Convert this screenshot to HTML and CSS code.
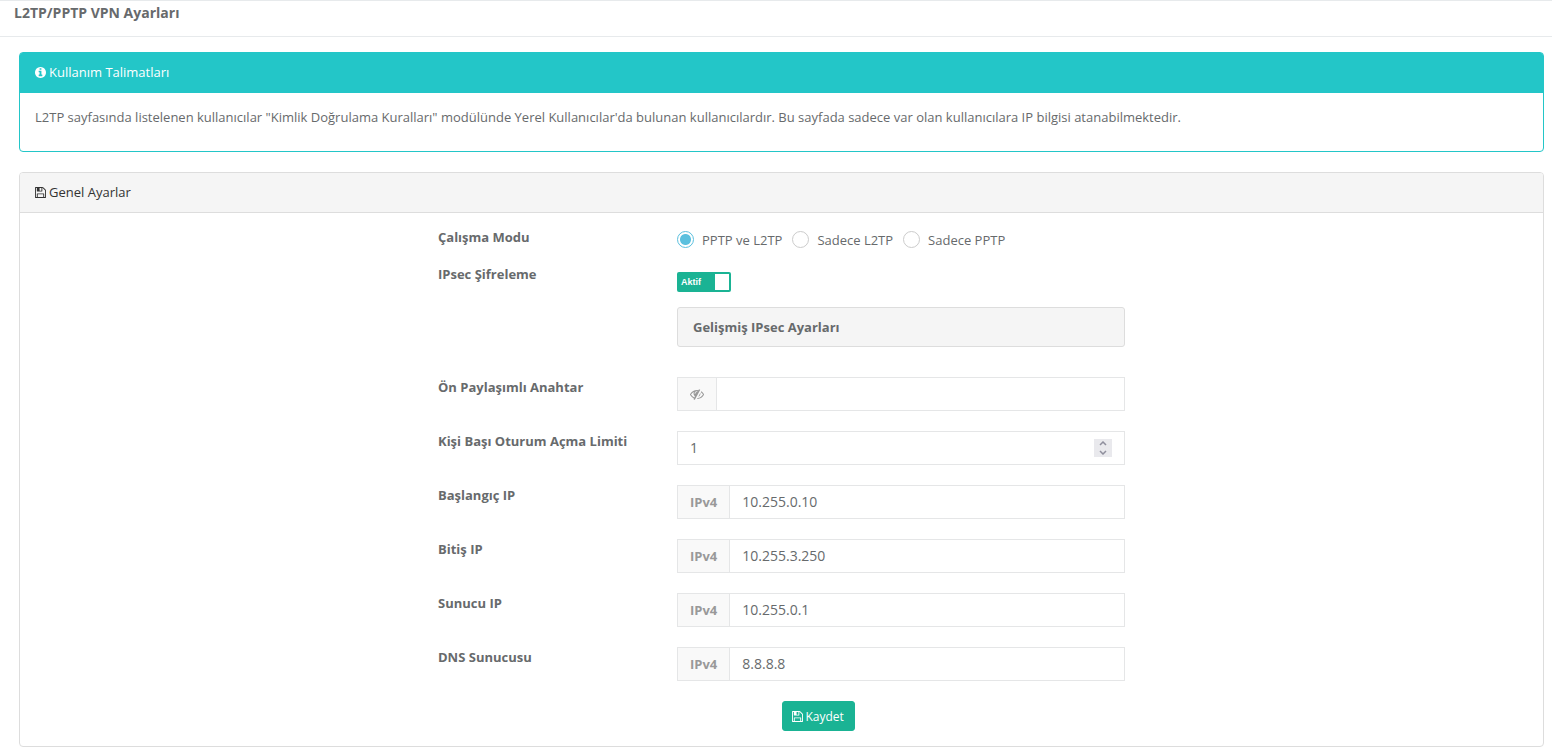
FILE: index.html
```html
<!DOCTYPE html>
<html lang="tr">
<head>
<meta charset="utf-8">
<meta name="viewport" content="width=device-width, initial-scale=1">
<title>L2TP/PPTP VPN Ayarları</title>
<link rel="stylesheet" href="styles.css">
</head>
<body>
<svg class="sprite" aria-hidden="true">
  <symbol id="icon-save" viewBox="128 128 1536 1536"><path d="M512 1536h768v-384h-768v384zm896 0h128v-896q0-14-10-38.5t-20-34.5l-281-281q-10-10-34-20t-39-10v416q0 40-28 68t-68 28h-576q-40 0-68-28t-28-68v-416h-128v1280h128v-416q0-40 28-68t68-28h832q40 0 68 28t28 68v416zm-384-928v-320q0-13-9.5-22.5t-22.5-9.5h-192q-13 0-22.5 9.5t-9.5 22.5v320q0 13 9.5 22.5t22.5 9.5h192q13 0 22.5-9.5t9.5-22.5zm640 32v928q0 40-28 68t-68 28h-1344q-40 0-68-28t-28-68v-1344q0-40 28-68t68-28h928q40 0 88 20t76 48l280 280q28 28 48 76t20 88z"/></symbol>
  <symbol id="icon-info" viewBox="128 128 1536 1536"><path d="M1152 1376v-160q0-14-9-23t-23-9h-96v-512q0-14-9-23t-23-9h-320q-14 0-23 9t-9 23v160q0 14 9 23t23 9h96v320h-96q-14 0-23 9t-9 23v160q0 14 9 23t23 9h448q14 0 23-9t9-23zm-128-896v-160q0-14-9-23t-23-9h-192q-14 0-23 9t-9 23v160q0 14 9 23t23 9h192q14 0 23-9t9-23zm640 416q0 209-103 385.5t-279.5 279.5-385.5 103-385.5-103-279.5-279.5-103-385.5 103-385.5 279.5-279.5 385.5-103 385.5 103 279.5 279.5 103 385.5z"/></symbol>
  <symbol id="icon-eye-slash" viewBox="0 0 1792 1792"><path d="M555 1335l78-141q-87-63-136-159t-49-203q0-121 61-225-229 117-381 353 167 258 427 375zm389-759q0-20-14-34t-34-14q-125 0-214.5 89.5t-89.5 214.5q0 20 14 34t34 14 34-14 14-34q0-86 61-147t147-61q20 0 34-14t14-34zm363-191q0 7-1 9-105 188-315 566t-316 567l-49 89q-10 16-28 16-12 0-134-70-16-10-16-28 0-12 44-87-143-65-263.5-173t-208.5-245q-20-31-20-69t20-69q153-235 380-371t496-136q89 0 180 17l54-97q10-16 28-16 5 0 18 6t31 15.5 33 18.5 31.5 18.5 19.5 11.5q16 10 16 27zm37 447q0 139-79 253.5t-209 164.5l280-502q8 45 8 84zm448 128q0 35-20 69-39 64-109 145-150 172-347.5 267t-419.5 95l74-132q212-18 392.5-137t301.5-307q-115-179-282-294l63-112q95 64 182.5 153t144.5 184q20 34 20 69z"/></symbol>
</svg>

<header class="page-head">
  <h1 class="page-title">L2TP/PPTP VPN Ayarları</h1>
</header>

<main class="content">
  <section class="panel panel-info">
    <h2 class="panel-head"><svg class="icon"><use href="#icon-info"/></svg>Kullanım Talimatları</h2>
    <div class="panel-note">
      <p class="note">L2TP sayfasında listelenen kullanıcılar "Kimlik Doğrulama Kuralları" modülünde Yerel Kullanıcılar'da bulunan kullanıcılardır. Bu sayfada sadece var olan kullanıcılara IP bilgisi atanabilmektedir.</p>
    </div>
  </section>

  <section class="panel">
    <h2 class="panel-head"><svg class="icon"><use href="#icon-save"/></svg>Genel Ayarlar</h2>
    <form class="form">
      <div class="row row-mode" role="radiogroup" aria-labelledby="mode-label">
        <span class="label" id="mode-label">Çalışma Modu</span>
        <div class="radios">
          <label class="radio"><input type="radio" name="mode" checked>PPTP ve L2TP</label>
          <label class="radio"><input type="radio" name="mode">Sadece L2TP</label>
          <label class="radio"><input type="radio" name="mode">Sadece PPTP</label>
        </div>
      </div>

      <div class="row row-ipsec">
        <label class="label" for="ipsec">IPsec Şifreleme</label>
        <div class="stack">
          <label class="switch"><input type="checkbox" id="ipsec" role="switch" checked><span class="switch-text">Aktif</span><span class="switch-knob"></span></label>
          <button class="advanced" type="button">Gelişmiş IPsec Ayarları</button>
        </div>
      </div>

      <div class="row row-field">
        <label class="label" for="psk">Ön Paylaşımlı Anahtar</label>
        <div class="group">
          <button class="addon" type="button" aria-label="Anahtarı göster"><svg class="icon-eye"><use href="#icon-eye-slash"/></svg></button>
          <input class="input" type="password" id="psk">
        </div>
      </div>

      <div class="row row-field">
        <label class="label" for="limit">Kişi Başı Oturum Açma Limiti</label>
        <div class="group group-number">
          <input class="input" type="number" id="limit" value="1">
          <span class="stepper">
            <button type="button" aria-label="Artır" onclick="limit.stepUp()"><svg viewBox="0 0 8 5"><path d="M1 4l3-3 3 3"/></svg></button>
            <button type="button" aria-label="Azalt" onclick="limit.stepDown()"><svg viewBox="0 0 8 5"><path d="M1 1l3 3 3-3"/></svg></button>
          </span>
        </div>
      </div>

      <div class="row row-field">
        <label class="label" for="start-ip">Başlangıç IP</label>
        <div class="group"><span class="addon">IPv4</span><input class="input" type="text" id="start-ip" value="10.255.0.10"></div>
      </div>
      <div class="row row-field">
        <label class="label" for="end-ip">Bitiş IP</label>
        <div class="group"><span class="addon">IPv4</span><input class="input" type="text" id="end-ip" value="10.255.3.250"></div>
      </div>
      <div class="row row-field">
        <label class="label" for="server-ip">Sunucu IP</label>
        <div class="group"><span class="addon">IPv4</span><input class="input" type="text" id="server-ip" value="10.255.0.1"></div>
      </div>
      <div class="row row-field">
        <label class="label" for="dns">DNS Sunucusu</label>
        <div class="group"><span class="addon">IPv4</span><input class="input" type="text" id="dns" value="8.8.8.8"></div>
      </div>

      <div class="actions">
        <button class="save" type="button"><svg class="icon"><use href="#icon-save"/></svg>Kaydet</button>
      </div>
    </form>
  </section>
</main>
</body>
</html>
```
FILE: styles.css
```css
* { box-sizing: border-box; }

body {
  margin: 0;
  background: #fff;
  color: #676a6c;
  font: 13px/19px "Open Sans", "Noto Sans", sans-serif;
}

button, input { font: inherit; color: inherit; margin: 0; }
button { cursor: pointer; }
.sprite { display: none; }

.icon {
  width: 11px;
  height: 11px;
  fill: currentColor;
  flex: none;
}

.page-head {
  border-top: 1px solid #e7eaec;
  border-bottom: 1px solid #e7eaec;
  padding: 2px 14px 14px;
}
.page-title { margin: 0; font-size: 14px; font-weight: 700; }

.content {
  display: flex;
  flex-direction: column;
  gap: 20px;
  padding: 15px 8px 5px 19px;
}

/* Panels */
.panel { border: 1px solid #ddd; border-radius: 4px; }
.panel-head {
  display: flex;
  align-items: center;
  gap: 3px;
  margin: 0;
  padding: 10px 15px;
  background: #f5f5f5;
  border-bottom: 1px solid #ddd;
  border-radius: 3px 3px 0 0;
  color: #333;
  font-size: 13px;
  font-weight: 400;
}
.panel-info { border-color: #23c6c8; }
.panel-info .panel-head {
  background: #23c6c8;
  border-color: #23c6c8;
  border-radius: 2px 2px 0 0;
  color: #fff;
}
.panel-note { padding: 15px 15px 24px; }
.note { margin: 0; }

/* Form */
.form {
  display: flex;
  flex-direction: column;
  gap: 20px;
  width: 45%;
  min-width: 687px;
  margin: 0 auto;
  padding: 15px 0;
}
.row {
  display: grid;
  grid-template-columns: 239px 1fr;
  align-items: start;
}
.label { font-weight: 700; }
.row-field .label { padding-top: 1px; }

.radios { display: flex; gap: 10px; padding-top: 3px; }
.radio { display: flex; align-items: flex-start; gap: 8px; }
.radio input {
  appearance: none;
  width: 17px;
  height: 17px;
  border: 1px solid #ccc;
  border-radius: 50%;
  background: #fff;
}
.radio input:checked {
  border-color: #5bc0de;
  background: radial-gradient(circle, #5bc0de 5px, #fff 6px);
}

.row-mode { margin-bottom: -5px; }
.row-ipsec { margin-bottom: 10px; }
.stack {
  display: flex;
  flex-direction: column;
  align-items: flex-start;
  gap: 15px;
  padding-top: 7px;
}
.switch {
  display: flex;
  align-items: center;
  justify-content: space-between;
  width: 54px;
  height: 20px;
  padding: 2px 2px 2px 4px;
  border-radius: 2px;
  background: #1ab394;
  color: #fff;
  font: bold 9px/16px "Liberation Sans", Arial, sans-serif;
  position: relative;
}
.switch input { position: absolute; inset: 0; opacity: 0; }
.switch-knob { width: 14px; height: 16px; background: #fff; }

.advanced {
  width: 100%;
  height: 40px;
  padding: 0 15px;
  border: 1px solid #ddd;
  border-radius: 3px;
  background: #f5f5f5;
  font-weight: 700;
  text-align: left;
}

.group { display: flex; height: 34px; border: 1px solid #e5e6e7; }
.addon {
  display: flex;
  align-items: center;
  padding: 0 12px;
  border: 0;
  border-right: 1px solid #e5e6e7;
  background: #f9f9f9;
  color: #999;
  font-weight: 700;
}
.icon-eye { width: 14px; height: 14px; fill: currentColor; }
.input {
  flex: 1;
  min-width: 0;
  padding: 0 12px 2px;
  border: 0;
  background: #fff;
  font-size: 14px;
  appearance: textfield;
}
.input::-webkit-inner-spin-button { appearance: none; }

.group-number { align-items: center; padding-right: 12px; }
.stepper {
  display: flex;
  flex-direction: column;
  width: 18px;
  background: #e9e9ed;
}
.stepper button {
  display: flex;
  align-items: center;
  justify-content: center;
  height: 9px;
  padding: 0;
  border: 0;
  background: none;
}
.stepper svg {
  width: 8px;
  height: 5px;
  fill: none;
  stroke: #8f8f9d;
  stroke-width: 1.5;
}

.actions { padding-left: 50%; }
.save {
  display: flex;
  align-items: center;
  gap: 3px;
  height: 30px;
  padding: 0 10px 0 9px;
  border: 1px solid #1ab394;
  border-radius: 3px;
  background: #1ab394;
  color: #fff;
  font-size: 12px;
}
```
